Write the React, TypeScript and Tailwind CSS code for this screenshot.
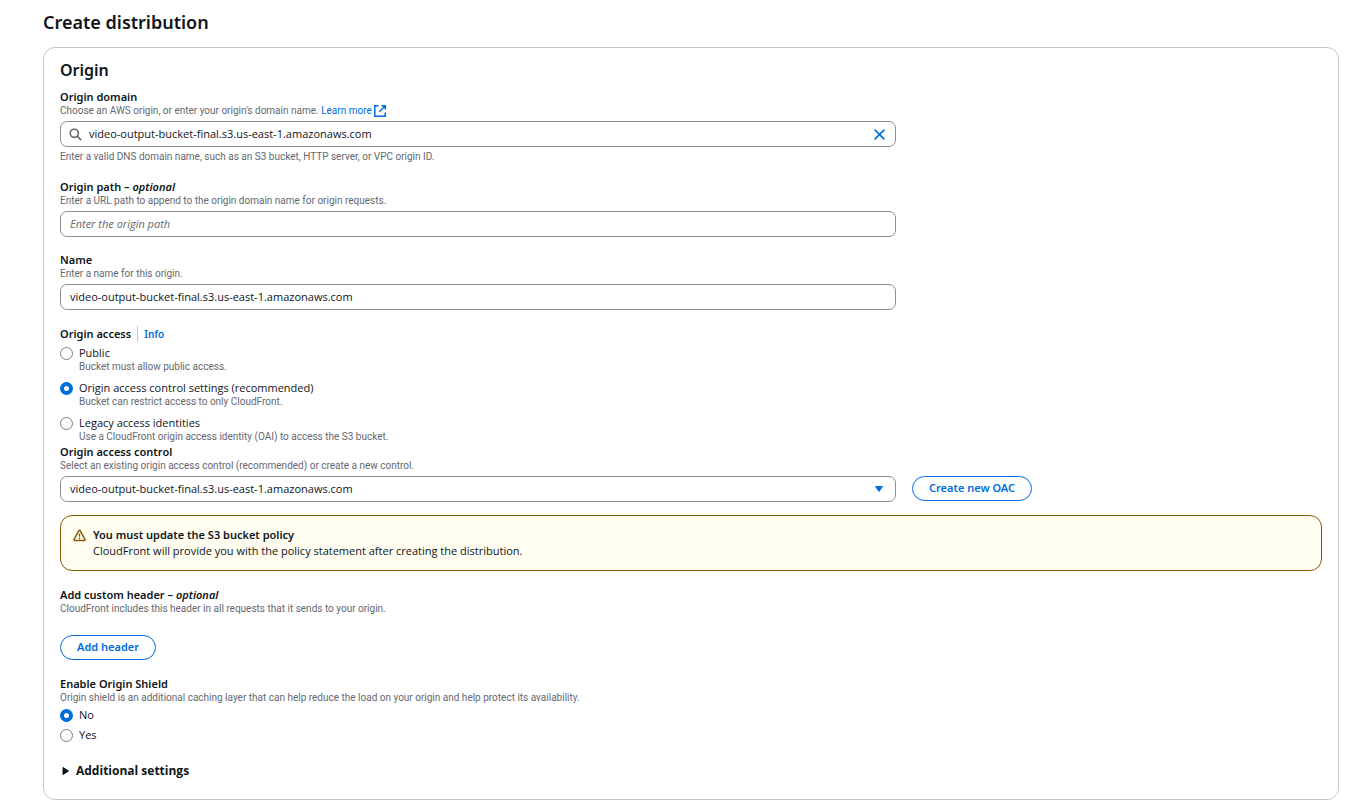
import { useState, type ReactNode } from 'react';

const BUCKET = 'video-output-bucket-final.s3.us-east-1.amazonaws.com';

const fieldClass =
  'block w-full h-[26px] rounded-[7px] border border-[#8c8c94] bg-white text-[11px] text-[#0f141a] placeholder:italic placeholder:text-[#656871] focus:outline-none focus:border-[#006ce0]';

const buttonClass =
  "h-[25px] rounded-full border border-[#006ce0] px-4 font-['Noto_Sans',sans-serif] text-[11px] font-semibold text-[#006ce0] whitespace-nowrap hover:bg-[#f0fbff]";

const labelClass = "font-['Noto_Sans',sans-serif] text-[11px] leading-[14px] font-semibold";

const hintClass = "font-['Roboto',sans-serif] text-[10px] leading-[14px] text-[#656871]";

function Heading({ id, label, optional, children }: { id: string; label: string; optional?: boolean; children: ReactNode }) {
  return (
    <div>
      <label htmlFor={id} className={`block ${labelClass}`}>
        {label}
        {optional && <> – <i>optional</i></>}
      </label>
      <p className={hintClass}>{children}</p>
    </div>
  );
}

interface RadioProps {
  name: string;
  label: string;
  description?: string;
  checked: boolean;
  onChange: () => void;
}

function Radio({ name, label, description, checked, onChange }: RadioProps) {
  return (
    <label className="flex items-start gap-[6px]">
      <input
        type="radio"
        name={name}
        checked={checked}
        onChange={onChange}
        className="mt-px size-[13px] shrink-0 appearance-none rounded-full border border-[#7d7d86] bg-white checked:border-4 checked:border-[#006ce0]"
      />
      <span>
        <span className="block text-[11px] leading-[14px]">{label}</span>
        {description && <span className={`block ${hintClass}`}>{description}</span>}
      </span>
    </label>
  );
}

export default function App() {
  const [domain, setDomain] = useState(BUCKET);
  const [path, setPath] = useState('');
  const [name, setName] = useState(BUCKET);
  const [access, setAccess] = useState('oac');
  const [shield, setShield] = useState('no');

  return (
    <main className="min-h-screen bg-white pt-[10px] pb-2 pl-[43px] pr-3 font-['Open_Sans','Noto_Sans',sans-serif] text-[#0f141a]">
      <h1 className="font-['Noto_Sans',sans-serif] text-[18px] leading-6 font-semibold">Create distribution</h1>

      <section className="mt-[13px] rounded-xl border border-[#c6c6cd] px-4 pt-3 pb-[19px]">
        <h2 className="font-['Noto_Sans',sans-serif] text-[16px] leading-5 font-semibold">Origin</h2>

        {/* Domain, path and name */}
        <div className="mt-[10px] grid grid-cols-3 gap-x-4">
          <div className="col-span-2 flex flex-col gap-4">
            <div>
              <Heading id="domain" label="Origin domain">
                Choose an AWS origin, or enter your origin's domain name.{' '}
                <a href="#learn-more" className="text-[#006ce0]">
                  Learn more
                  <svg viewBox="0 0 16 16" className="ml-[2px] inline size-3" fill="none" stroke="currentColor" strokeWidth="2">
                    <path d="M10 1h5v5M15 1 7 9M6 1H1v14h14v-5" />
                  </svg>
                </a>
              </Heading>
              <div className="relative mt-[3px]">
                <svg viewBox="0 0 16 16" className="absolute left-[9px] top-[7px] size-[13px] text-[#656871]" fill="none" stroke="currentColor" strokeWidth="2">
                  <circle cx="6.5" cy="6.5" r="5" />
                  <path d="m10 10 5 5" />
                </svg>
                <input id="domain" type="text" value={domain} onChange={(e) => setDomain(e.target.value)} className={`${fieldClass} pl-7 pr-8 pb-px`} />
                <button type="button" aria-label="Clear" onClick={() => setDomain('')} className="absolute right-[10px] top-[7px] text-[#006ce0]">
                  <svg viewBox="0 0 16 16" className="size-[13px]" fill="none" stroke="currentColor" strokeWidth="2">
                    <path d="m2 2 12 12M14 2 2 14" />
                  </svg>
                </button>
              </div>
              <p className={`mt-[3px] ${hintClass}`}>
                Enter a valid DNS domain name, such as an S3 bucket, HTTP server, or VPC origin ID.
              </p>
            </div>

            <div>
              <Heading id="path" label="Origin path" optional>
                Enter a URL path to append to the origin domain name for origin requests.
              </Heading>
              <input id="path" type="text" placeholder="Enter the origin path" value={path} onChange={(e) => setPath(e.target.value)} className={`${fieldClass} mt-[3px] px-[9px] pb-px`} />
            </div>

            <div>
              <Heading id="name" label="Name">Enter a name for this origin.</Heading>
              <input id="name" type="text" value={name} onChange={(e) => setName(e.target.value)} className={`${fieldClass} mt-[3px] px-[9px] pb-px`} />
            </div>
          </div>
        </div>

        {/* Origin access */}
        <fieldset className="mt-4">
          <legend className="flex items-center font-['Noto_Sans',sans-serif] text-[11px] leading-4 font-semibold">
            Origin access
            <a href="#info" className="ml-[6px] border-l border-[#c6c6cd] pl-[6px] text-[10px] text-[#006ce0]">
              Info
            </a>
          </legend>
          <div className="mt-1 flex flex-col gap-[7px]">
            <Radio name="access" label="Public" description="Bucket must allow public access." checked={access === 'public'} onChange={() => setAccess('public')} />
            <Radio name="access" label="Origin access control settings (recommended)" description="Bucket can restrict access to only CloudFront." checked={access === 'oac'} onChange={() => setAccess('oac')} />
            <Radio name="access" label="Legacy access identities" description="Use a CloudFront origin access identity (OAI) to access the S3 bucket." checked={access === 'oai'} onChange={() => setAccess('oai')} />
          </div>
        </fieldset>

        <div className="mt-px grid grid-cols-3 items-end gap-x-4">
          <div className="col-span-2">
            <Heading id="oac" label="Origin access control">
              Select an existing origin access control (recommended) or create a new control.
            </Heading>
            <div className="relative mt-[3px]">
              <select id="oac" className={`${fieldClass} appearance-none px-[9px]`}>
                <option>{BUCKET}</option>
              </select>
              <svg viewBox="0 0 10 8" className="pointer-events-none absolute right-3 top-[9px] h-2 w-[10px] text-[#006ce0]" fill="currentColor">
                <path d="M1.5 1.5h7L5 6.5z" stroke="currentColor" strokeLinejoin="round" />
              </svg>
            </div>
          </div>
          <div>
            <button type="button" className={`${buttonClass} mb-px block`}>Create new OAC</button>
          </div>
        </div>

        <div role="alert" className="mt-[13px] flex gap-[7px] rounded-xl border border-[#855900] bg-[#fffef0] px-3 py-[11px]">
          <svg viewBox="0 0 16 16" className="mt-[2px] size-[13px] shrink-0 text-[#855900]" fill="none" stroke="currentColor" strokeLinejoin="round">
            <path d="M7.2 2 1.2 13Q1 14.2 2 14.2H14Q15 14.2 14.8 13L8.8 2Q8 1.2 7.2 2z" strokeWidth="1.8" />
            <path d="M8 5.5v4M8 10.5v2" strokeWidth="1.6" />
          </svg>
          <div className="text-[11px] leading-4">
            <p className="font-['Noto_Sans',sans-serif] font-semibold">You must update the S3 bucket policy</p>
            <p>CloudFront will provide you with the policy statement after creating the distribution.</p>
          </div>
        </div>

        {/* Custom headers */}
        <div className="mt-[17px]">
          <Heading id="add-header" label="Add custom header" optional>
            CloudFront includes this header in all requests that it sends to your origin.
          </Heading>
          <button id="add-header" type="button" className={`${buttonClass} mt-[19px]`}>Add header</button>
        </div>

        {/* Origin shield */}
        <fieldset className="mt-[17px]">
          <legend className={labelClass}>Enable Origin Shield</legend>
          <p className={hintClass}>
            Origin shield is an additional caching layer that can help reduce the load on your origin and help protect its availability.
          </p>
          <div className="mt-[3px] flex flex-col gap-[6px]">
            <Radio name="shield" label="No" checked={shield === 'no'} onChange={() => setShield('no')} />
            <Radio name="shield" label="Yes" checked={shield === 'yes'} onChange={() => setShield('yes')} />
          </div>
        </fieldset>

        <button type="button" aria-expanded="false" className="mt-5 flex items-center gap-[6px] pl-[2px] text-[12px] leading-[18px] font-bold">
          <svg viewBox="0 0 8 10" className="h-[10px] w-2" fill="currentColor">
            <path d="M1 1.5v7l5.5-3.5z" stroke="currentColor" strokeLinejoin="round" />
          </svg>
          Additional settings
        </button>
      </section>
    </main>
  );
}
